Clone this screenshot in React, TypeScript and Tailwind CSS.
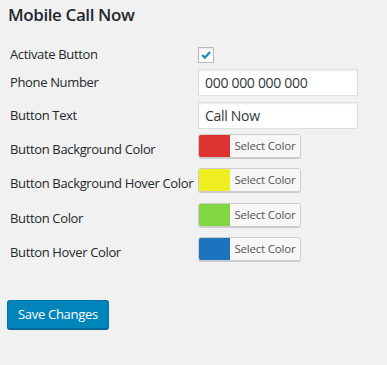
import React from 'react';

const colorRows = [
  { label: 'Button Background Color', color: 'bg-[#dd3333]', mt: 'mt-[5px]' },
  { label: 'Button Background Hover Color', color: 'bg-[#eeee22]', mt: 'mt-[10px]' },
  { label: 'Button Color', color: 'bg-[#81d742]', mt: 'mt-[11px]' },
  { label: 'Button Hover Color', color: 'bg-[#1e73be]', mt: 'mt-[10px]' },
];

function ColorPicker({ color }: { color: string }) {
  return (
    <div className="flex h-[24px] w-[103px] overflow-hidden rounded-[3px] border border-[#cccccc] shadow-[0_1px_0_#cccccc]">
      <div className={`w-[31px] shrink-0 ${color}`} />
      <div className="flex flex-1 items-center justify-center bg-[#f7f7f7] text-[11.5px] tracking-[-0.2px] text-[#555555]">
        Select Color
      </div>
    </div>
  );
}

export default function App() {
  return (
    <div className="min-h-[365px] w-full bg-[#f1f1f1] font-['Open_Sans','Noto_Sans',sans-serif] text-[#23282d]">
      <div className="pl-[8px] pt-[3px]">
        <h2 className="text-[17px] font-semibold leading-[24px] tracking-[-0.4px]">Mobile Call Now</h2>
      </div>

      <div className="mt-[20px] pl-[10px]">
        <div className="flex h-[16px] items-center">
          <div className="w-[188px] whitespace-nowrap text-[13px] tracking-[-0.35px]">Activate Button</div>
          <div className="flex h-[16px] w-[16px] items-center justify-center border border-[#b4b9be] bg-white shadow-[inset_0_1px_2px_rgba(0,0,0,0.1)]">
            <svg viewBox="0 0 16 16" className="h-[15px] w-[15px]">
              <path d="M2.6 8.4l1.9-1.9 2.3 2.2 4.9-5.6 1.9 1.7-6.8 7.6z" fill="#1e8cbe" />
            </svg>
          </div>
        </div>

        <div className="mt-[6px] flex items-center">
          <div className="w-[188px] whitespace-nowrap text-[13px] tracking-[-0.35px]">Phone Number</div>
          <div className="flex h-[27px] w-[160px] items-center border border-[#dddddd] bg-white pl-[6px] text-[14px] tracking-[-0.3px] text-[#32373c] shadow-[inset_0_1px_2px_rgba(0,0,0,0.07)]">
            000 000 000 000
          </div>
        </div>

        <div className="mt-[6px] flex items-center">
          <div className="w-[188px] whitespace-nowrap text-[13px] tracking-[-0.35px]">Button Text</div>
          <div className="flex h-[27px] w-[160px] items-center border border-[#dddddd] bg-white pl-[6px] text-[14px] tracking-[-0.3px] text-[#32373c] shadow-[inset_0_1px_2px_rgba(0,0,0,0.07)]">
            Call Now
          </div>
        </div>

        {colorRows.map((row) => (
          <div key={row.label} className={`${row.mt} flex h-[24px] items-start`}>
            <div className="w-[188px] whitespace-nowrap pt-[7px] text-[13px] leading-[17px] tracking-[-0.35px]">{row.label}</div>
            <ColorPicker color={row.color} />
          </div>
        ))}
      </div>

      <div className="mt-[39px] pl-[7px]">
        <button className="h-[29px] rounded-[3px] border border-[#0073aa] border-b-[#006799] bg-[#0085ba] px-[10px] text-[13px] tracking-[-0.3px] text-white shadow-[0_1px_0_#006799]">
          Save Changes
        </button>
      </div>
    </div>
  );
}
